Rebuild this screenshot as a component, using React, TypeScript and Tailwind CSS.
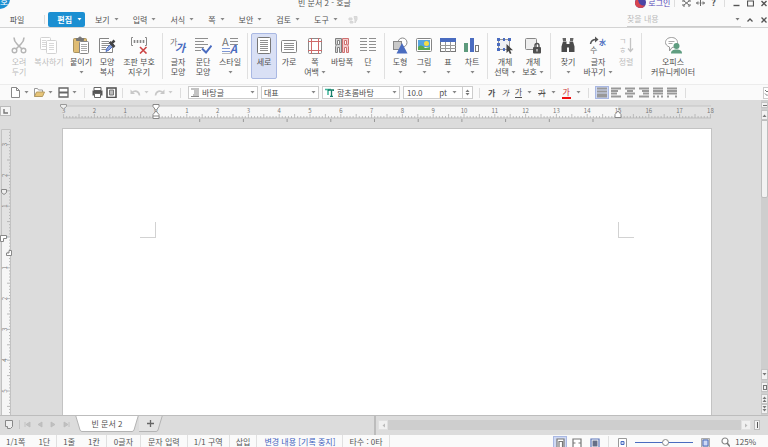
import React, { useState } from "react";
import clsx from "clsx";

const GRAY = "#8f8f8f";
const DARK = "#505050";
const BLUE = "#4a6cc0";
const RED = "#cc4444";

const Caret = ({ className }: { className?: string }) => (
  <svg className={clsx("shrink-0", className)} width="5" height="3" viewBox="0 0 5 3">
    <path d="M0.5 0h4L2.5 2.500z" fill="currentColor" />
  </svg>
);

const Icon = ({ w = 18, h = 18, children }: { w?: number; h?: number; children: React.ReactNode }) => (
  <svg className="shrink-0" width={w} height={h} viewBox={`0 0 ${w} ${h}`} fill="none" aria-hidden="true">
    {children}
  </svg>
);

const lines = (x1: number, x2: number, ys: number[], color = GRAY) =>
  ys.map((y) => <path key={`${x1}-${y}`} d={`M${x1} ${y}H${x2}`} stroke={color} />);

type RibbonItem = {
  label: string[];
  width: string;
  icon: React.ReactNode;
  caret?: boolean;
  disabled?: boolean;
};

const ribbonGroups: RibbonItem[][] = [
  [
    {
      label: ["오려", "두기"],
      width: "w-6",
      disabled: true,
      icon: (
        <Icon>
          <path d="M4 1.500c0 3 1 4.500 3 6.500l5 5M14 1.500c0 3-1 4.500-3 6.500l-5 5" stroke="#b5b5b5" strokeWidth="1.600" />
          <circle cx="4.500" cy="14.500" r="2.300" stroke="#b5b5b5" strokeWidth="1.400" />
          <circle cx="13.500" cy="14.500" r="2.300" stroke="#b5b5b5" strokeWidth="1.400" />
        </Icon>
      ),
    },
    {
      label: ["복사하기"],
      width: "w-9",
      disabled: true,
      icon: (
        <Icon>
          <rect x="0.500" y="1.500" width="10" height="12" rx="1" fill="#fff" stroke="#d2d2d2" />
          {lines(2, 6, [4.5, 6.5, 8.5, 10.5], "#d8d8d8")}
          <rect x="6.500" y="4.500" width="10" height="13" rx="1" fill="#fff" stroke="#d2d2d2" />
          {lines(9, 14, [7.5, 9.5, 11.5, 13.5], "#d8d8d8")}
        </Icon>
      ),
    },
    {
      label: ["붙이기"],
      width: "w-7",
      caret: true,
      icon: (
        <Icon>
          <rect x="1.500" y="2.500" width="13" height="14" rx="1" fill="#dfbc74" stroke="#a8925f" />
          <path d="M4.500 4.500v-2h2a1.500 1.500 0 0 1 3 0h2v2z" fill="#777" stroke="#777" />
          <rect x="7.500" y="5.500" width="9" height="12" rx="1" fill="#fff" stroke="#858585" />
          {lines(9, 15, [8.5, 10.5, 12.5, 14.5], "#aaa")}
        </Icon>
      ),
    },
    {
      label: ["모양", "복사"],
      width: "w-6",
      icon: (
        <Icon>
          <path d="M14.500 11v5.500h-13v-14H11" fill="#fff" stroke="#858585" />
          {lines(3.5, 11, [5.5, 7.5, 9.5])}
          {lines(3.5, 8, [11.5, 13.5])}
          <path d="M8 15.500l1-3.500 5-5 2 2-5 5z" fill="#8ea4dc" stroke={BLUE} />
          <path d="M11.500 6l5 5M13 8l3.500-3.500" stroke="#444" strokeWidth="2.500" />
        </Icon>
      ),
    },
    {
      label: ["조판 부호", "지우기"],
      width: "w-10",
      icon: (
        <Icon>
          <path d="M3 1.500H1.500v8H3M15 1.500h1.500v8H15" stroke="#888" />
          <path d="M4.500 4v3M7.500 4v3M10.500 4v3M13.500 4v3" stroke="#888" strokeWidth="1.600" />
          <path d="M10 11l6.500 6.500M16.500 11L10 17.500" stroke={RED} strokeWidth="1.600" />
        </Icon>
      ),
    },
  ],
  [
    {
      label: ["글자", "모양"],
      width: "w-6",
      icon: (
        <Icon>
          <text x="1" y="9" fontSize="8" fill="#777">가</text>
          <text x="6" y="16" fontSize="11" fontWeight="700" fontStyle="italic" fill={BLUE}>가</text>
        </Icon>
      ),
    },
    {
      label: ["문단", "모양"],
      width: "w-[26px]",
      icon: (
        <Icon>
          {lines(1, 14, [2.5, 8.5])}
          {lines(1, 10, [5.5, 11.5])}
          {lines(1, 7, [14.5])}
          <path d="M8 12.500l4 4 5.500-7" stroke={BLUE} strokeWidth="2" />
        </Icon>
      ),
    },
    {
      label: ["스타일"],
      width: "w-7",
      caret: true,
      icon: (
        <Icon>
          <text x="1" y="10" fontSize="11" fill="#777">A</text>
          {lines(9, 17, [2.5, 5.5, 8.5])}
          {lines(1, 9, [12.5, 15.5], "#7d96d4")}
          <path d="M1 17.500h10" stroke="#bbb" />
          <text x="9" y="17" fontSize="11" fontWeight="700" fontStyle="italic" fill={BLUE}>A</text>
        </Icon>
      ),
    },
  ],
  [
    {
      label: ["세로"],
      width: "w-[26px]",
      icon: (
        <Icon>
          <rect x="2.500" y="1.500" width="13" height="16" rx="1" fill="#fff" stroke="#777" />
          {lines(5, 13, [4.5, 6.5, 8.5, 10.5, 12.5, 14.5])}
        </Icon>
      ),
    },
    {
      label: ["가로"],
      width: "w-6",
      icon: (
        <Icon>
          <rect x="1.500" y="4.500" width="15" height="12" rx="1" fill="#fff" stroke="#858585" />
          {lines(4, 14, [7.5, 9.5, 11.5, 13.5])}
        </Icon>
      ),
    },
    {
      label: ["쪽", "여백"],
      width: "w-7",
      caret: true,
      icon: (
        <Icon>
          <rect x="2.500" y="2.500" width="13" height="15" rx="1" fill="#fff" stroke="#8a8a8a" />
          <path d="M5.500 2v16M12.500 2v16M2 5.500h14M2 14.500h14" stroke="#d06a6a" />
        </Icon>
      ),
    },
    {
      label: ["바탕쪽"],
      width: "w-[26px]",
      icon: (
        <Icon>
          <path
            d="M2.500 2.500h6v14h-2v-5h-2v5h-2v-6l1-2h-1zM4.500 4.500v4h2v-4z"
            fill="#d4d4d4"
            fillRule="evenodd"
            stroke="#808080"
          />
          <path
            d="M15.500 2.500h-6v14h2v-5h2v5h2v-6l-1-2h1zM13.500 4.500v4h-2v-4z"
            fill="#f3cccc"
            fillRule="evenodd"
            stroke="#cf7070"
          />
        </Icon>
      ),
    },
    {
      label: ["단"],
      width: "w-[26px]",
      caret: true,
      icon: (
        <Icon>
          {lines(1, 8, [2.5, 5.5, 8.5, 11.5, 14.5])}
          {lines(10, 17, [2.5, 5.5, 8.5, 11.5, 14.5])}
        </Icon>
      ),
    },
  ],
  [
    {
      label: ["도형"],
      width: "w-6",
      caret: true,
      icon: (
        <Icon>
          <circle cx="11.500" cy="6.500" r="4.500" fill="#fff" stroke="#888" />
          <rect x="2.500" y="5.500" width="8" height="8" fill="#c9c9c9" stroke="#888" />
          <path d="M11 7l5.500 10.500H5.500z" fill={BLUE} />
        </Icon>
      ),
    },
    {
      label: ["그림"],
      width: "w-6",
      caret: true,
      icon: (
        <Icon>
          <rect x="1.500" y="2.500" width="15" height="13" rx="1" fill="#fff" stroke="#858585" />
          <path d="M3 4h12v7H3z" fill="#56a5df" />
          <path d="M3 11c3-3 5-1 7 1l5-1v3H3z" fill="#58aa50" />
          <circle cx="11.500" cy="7.500" r="2.500" fill="#f7dc45" />
        </Icon>
      ),
    },
    {
      label: ["표"],
      width: "w-6",
      caret: true,
      icon: (
        <Icon>
          <rect x="1.500" y="2.500" width="15" height="13" fill="#fff" stroke="#777" />
          <path d="M1 2h16v4H1z" fill={BLUE} />
          <path d="M6.500 6v10M11.500 6v10M1 9.500h16M1 12.500h16" stroke="#999" />
        </Icon>
      ),
    },
    {
      label: ["차트"],
      width: "w-6",
      caret: true,
      icon: (
        <Icon>
          <rect x="1" y="7" width="4" height="9" fill="#5d9a7c" />
          <rect x="7" y="2" width="4" height="14" fill={BLUE} />
          <rect x="12.500" y="9.500" width="3" height="6" fill="#fff" stroke="#777" />
        </Icon>
      ),
    },
  ],
  [
    {
      label: ["개체", "선택"],
      width: "w-7",
      caret: true,
      icon: (
        <Icon>
          <rect x="2.500" y="3.500" width="11" height="10" fill="#eef0f4" stroke="#999" />
          <path
            d="M1 2h3v3H1zM7 2h2v3H7zM12 2h3v3h-3zM1 7h3v3H1zM1 12h3v3H1zM7 12h2v3H7z"
            fill={BLUE}
          />
          <path d="M10.500 8v9l2-2 1.500 3 1.500-.8-1.500-3h3z" fill="#444" />
        </Icon>
      ),
    },
    {
      label: ["개체", "보호"],
      width: "w-7",
      caret: true,
      icon: (
        <Icon>
          <rect x="1.500" y="2.500" width="11" height="11" rx="1" fill="#eee" stroke="#888" />
          <rect x="9" y="11" width="8" height="6.500" rx="1" fill={DARK} />
          <path d="M11 11V9.500a2 2 0 0 1 4 0V11" stroke={DARK} strokeWidth="1.400" />
          <path d="M13 13v2.500" stroke="#fff" />
        </Icon>
      ),
    },
  ],
  [
    {
      label: ["찾기"],
      width: "w-7",
      caret: true,
      icon: (
        <Icon>
          <path d="M3.500 2H7v3H4zM11 2h3.500L14 5h-3z" fill="#666" />
          <path d="M4 5.500h3.500V8h3V5.500H14l1.500 5V16H10v-4.500H8V16H2.500v-5.500z" fill="#4a4a4a" />
        </Icon>
      ),
    },
    {
      label: ["글자", "바꾸기"],
      width: "w-8",
      caret: true,
      icon: (
        <Icon>
          <path d="M1.500 8C2 4.500 4.500 3.500 7 3.500" stroke="#555" strokeWidth="1.500" />
          <path d="M6 0.500l3.500 3L6 6.500z" fill="#555" />
          <text x="10" y="9" fontSize="7" fontWeight="700" fill={BLUE}>水</text>
          <text x="1" y="17" fontSize="8" fill="#666">수</text>
        </Icon>
      ),
    },
    {
      label: ["정렬"],
      width: "w-6",
      disabled: true,
      icon: (
        <Icon>
          <text x="2" y="8" fontSize="8" fill="#bbb">ㄱ</text>
          <text x="2" y="17" fontSize="8" fill="#bbb">ㅎ</text>
          <path d="M13.500 2v13M11 12.500l2.500 3 2.500-3" stroke="#c4c4c4" strokeWidth="1.300" />
        </Icon>
      ),
    },
  ],
  [
    {
      label: ["오피스", "커뮤니케이터"],
      width: "w-14",
      icon: (
        <Icon>
          <path
            d="M7.500 1.500c3.500 0 6 2 6 5s-2.500 5-5.500 5L5.500 15v-4C3 10 1.500 8.500 1.500 6.500c0-3 2.500-5 6-5z"
            fill="#fff"
            stroke="#999"
          />
          <path d="M4.500 5.500h6M4.500 7.500h4" stroke="#aaa" />
          <circle cx="12.500" cy="10" r="3" fill="#5f9d80" />
          <path d="M7 17.500c0-3 2-4 5.500-4s5.500 1 5.500 4z" fill="#5f9d80" />
        </Icon>
      ),
    },
  ],
];

const menus = ["보기", "입력", "서식", "쪽", "보안", "검토", "도구"];

const fontSelect =
  "h-[13px] w-full appearance-none border border-[#cccccc] bg-white text-[8px] leading-[11px] text-[#505050] outline-none";

const ToolDivider = () => <span className="h-[10px] w-px shrink-0 bg-[#dddddd]" />;

function TitleBar() {
  return (
    <div className="relative -mt-[6px] flex h-[18px] items-center justify-end pr-px">
      <span className="absolute left-0 top-0 flex h-[15px] w-[10px] items-end overflow-hidden rounded-br-xl bg-[#1b8fd2] pb-px text-[9px] leading-3 text-white">
        호
      </span>
      <h1 className="absolute left-1/2 -translate-x-[86px] whitespace-nowrap text-[8px] text-[#555]">
        빈 문서 2 - 호글
      </h1>
      <button className="flex items-center gap-[2px] text-[8px] text-[#5548b8]">
        <Icon w={11} h={11}>
          <circle cx="5.500" cy="4.500" r="5.500" fill="#4b45a5" />
          <path d="M0 5.500a5.500 5.500 0 0 0 10 2C6 8 3 6 3 0 1 1 0 3 0 5.500z" fill="#d8454f" />
        </Icon>
        로그인
      </button>
      <span className="ml-1 h-2 w-px bg-[#dddddd]" />
      <button aria-label="전체 화면" className="ml-[7px]">
        <Icon w={9} h={8}>
          <path d="M1 3V1h2M6 1h2v2M8 5v2H6M3 7H1V5M2 2l5 4M7 2L2 6" stroke="#666" />
        </Icon>
      </button>
      <button aria-label="크기 조절" className="ml-[5px]">
        <Icon w={9} h={8}>
          <path d="M4.500 1v6M0.500 4h3M5.500 4h3M2 2.500L.5 4 2 5.500M7 2.500L8.500 4 7 5.500" stroke="#666" />
        </Icon>
      </button>
      <button aria-label="도움말" className="ml-[6px] text-[9px] font-bold text-[#555]">?</button>
      <span className="ml-2 h-2 w-px bg-[#dddddd]" />
      <button aria-label="최소화" className="ml-2">
        <Icon w={7} h={7}><path d="M0.500 5.500h6" stroke="#555" strokeWidth="1.400" /></Icon>
      </button>
      <button aria-label="최대화" className="ml-[7px]">
        <Icon w={7} h={7}><path d="M0.500 1h6v5h-6z" stroke="#555" strokeWidth="1.200" /></Icon>
      </button>
      <button aria-label="닫기" className="ml-[7px]">
        <Icon w={6} h={7}><path d="M0.500 1l5 5M5.500 1l-5 5" stroke="#555" strokeWidth="1.400" /></Icon>
      </button>
    </div>
  );
}

function MenuBar() {
  return (
    <nav className="flex h-4 items-stretch border-b border-[#d4d4d4] text-[8px] text-[#505050]">
      <button className="w-[34px]">파일</button>
      <span className="ml-[10px] mr-[3px] h-[9px] w-px self-center bg-[#dddddd]" />
      <button className="flex w-[37px] items-center justify-end gap-[5px] rounded-xs bg-[#1b8fd2] pr-[3px] font-bold text-white">
        편집 <Caret />
      </button>
      <div className="ml-[3px] flex">
        {menus.map((menu) => (
          <button key={menu} className="flex items-center gap-1 px-[7px]">
            {menu} <Caret className="text-[#888]" />
          </button>
        ))}
      </div>
      <button aria-label="도움" className="ml-[3px]">
        <Icon w={10} h={9}>
          <path d="M1 3h3v2H1zM2 6.500h3V8H2zM6 1.500h3v3L7 8V5z" fill="#dcdcdc" stroke="#d6d6d6" />
        </Icon>
      </button>
      <div className="ml-auto flex w-[114px] items-center border-b border-[#cccccc]">
        <input
          aria-label="찾을 내용"
          placeholder="찾을 내용"
          className="w-full min-w-0 bg-transparent text-[8px] leading-3 outline-none placeholder:text-[#bbbbbb]"
        />
        <Caret className="mr-px text-[#777]" />
      </div>
      <button aria-label="접기" className="ml-[6px]">
        <Icon w={6} h={6}><path d="M0.500 4.500L3 2l2.500 2.500" stroke="#555" strokeWidth="1.300" /></Icon>
      </button>
      <button aria-label="문서 닫기" className="ml-2 mr-px">
        <Icon w={6} h={6}><path d="M0.500 0.500l5 5M5.500 0.500l-5 5" stroke="#555" strokeWidth="1.300" /></Icon>
      </button>
    </nav>
  );
}

function Ribbon() {
  const [orientation, setOrientation] = useState("세로");
  return (
    <section className="flex h-14 shrink-0 bg-[#fcfcfc] py-[5px] pl-1">
      {ribbonGroups.map((group, i) => (
        <div
          key={i}
          className="flex border-r border-[#e0e0e0] px-[3px] last:border-r-0"
        >
          {group.map((item) => {
            const name = item.label.join(" ");
            return (
              <button
                key={name}
                disabled={item.disabled}
                onClick={() => (name === "세로" || name === "가로") && setOrientation(name)}
                className={clsx(
                  "flex flex-col items-center rounded-xs border pt-[2px] text-[8px] leading-[10px] whitespace-nowrap",
                  item.width,
                  item.disabled ? "text-[#bcbcbc]" : "text-[#505050]",
                  name === orientation ? "border-[#a9b8e3] bg-[#d9e0f5] text-[#3f62b8]" : "border-transparent"
                )}
              >
                {item.icon}
                <span className="mt-[3px]">{item.label[0]}</span>
                <span className="flex h-[10px] items-center gap-[2px]">
                  {item.label[1]}
                  {item.caret && <Caret className="text-[#888]" />}
                </span>
              </button>
            );
          })}
        </div>
      ))}
    </section>
  );
}

const ToolButton = ({ name, caret, faded, children }: { name: string; caret?: boolean; faded?: boolean; children: React.ReactNode }) => (
  <button
    aria-label={name}
    disabled={faded}
    className={clsx("flex items-center gap-[3px]", faded ? "text-[#cccccc]" : "text-[#888]")}
  >
    {children}
    {caret && <Caret />}
  </button>
);

const alignIcons = [
  { name: "양쪽 정렬", path: "M1 1.500h10M1 4.500h10M1 7.500h10M1 9.500h10" },
  { name: "왼쪽 정렬", path: "M1 1.500h10M1 4h7M1 6.500h6M1 9.500h10" },
  { name: "가운데 정렬", path: "M1 1.500h10M3 4h6M1 6.500h10M3 9.500h6" },
  { name: "오른쪽 정렬", path: "M1 1.500h10M4 4h7M5 6.500h6M1 9.500h10" },
  { name: "배분 정렬", path: "M1 1.500h10M1 4h10M1 6.500h10M1 9.500h2M5 9.500h2M9 9.500h2" },
  { name: "나눔 정렬", path: "M1 1.500h10M1 4h10M1 6.500h10M1 9.500h2M9 9.500h2" },
];

function Toolbar() {
  const [size, setSize] = useState("10.0");
  const [align, setAlign] = useState("양쪽 정렬");
  return (
    <section className="flex h-4 shrink-0 items-center border-t border-[#ececec] bg-[#fafafa] text-[8px] text-[#505050]">
      <div className="flex items-center gap-[5px] pl-[10px]">
        <ToolButton name="새 문서" caret>
          <Icon w={11} h={11}>
            <path d="M1.500 0.500h5l3 3v7h-8zM6.500 0.500v3h3" fill="#fff" stroke="#888" />
          </Icon>
        </ToolButton>
        <ToolButton name="불러오기" caret>
          <Icon w={11} h={11}>
            <path d="M0.500 9.500v-8h3l1 1.500h4v2" fill="#fff" stroke="#999" />
            <path d="M0.500 9.500l2-4.500h8l-2 4.500z" fill="#e6c478" stroke="#b39a60" />
          </Icon>
        </ToolButton>
        <ToolButton name="저장하기" caret>
          <Icon w={11} h={11}>
            <path d="M1 1h9v9H1z" fill="#fff" stroke="#666" strokeWidth="1.300" />
            <path d="M1 5.500h9" stroke="#666" strokeWidth="2" />
          </Icon>
        </ToolButton>
      </div>
      <div className="ml-[7px] flex items-center gap-[3px]">
        <ToolDivider />
        <div className="ml-1">
          <ToolButton name="인쇄">
            <Icon w={11} h={11}>
              <path d="M2 0.500h7v3H2z" fill="#fff" stroke="#666" />
              <path d="M0.500 3.500h10v5h-10z" fill="#555" />
              <path d="M2.500 6.500h6v4h-6z" fill="#fff" stroke="#666" />
            </Icon>
          </ToolButton>
        </div>
        <ToolButton name="미리 보기">
          <Icon w={11} h={11}>
            <rect x="1" y="1" width="9" height="9.500" fill="#fff" stroke="#555" strokeWidth="1.600" />
            <path d="M3.500 3h4v5h-4z" fill="#bbb" stroke="#777" />
          </Icon>
        </ToolButton>
      </div>
      <span className="w-[5px]" />
      <ToolDivider />
      <div className="ml-[7px] flex items-center gap-[5px]">
        <ToolButton name="되돌리기" caret faded>
          <Icon w={11} h={9}>
            <path d="M2 4.500C5 2 9 3 9.500 7.500" stroke="#c8c8c8" strokeWidth="1.600" />
            <path d="M0.500 1.500v4.500h4.500z" fill="#c8c8c8" />
          </Icon>
        </ToolButton>
        <ToolButton name="다시 실행" caret faded>
          <Icon w={11} h={9}>
            <path d="M9 4.500C6 2 2 3 1.500 7.500" stroke="#c8c8c8" strokeWidth="1.600" />
            <path d="M10.500 1.500v4.500H6z" fill="#c8c8c8" />
          </Icon>
        </ToolButton>
      </div>
      <span className="w-[7px]" />
      <ToolDivider />

      <label className="relative ml-[7px] w-[70px]">
        <span className="absolute left-[3px] top-[2px]">
          <Icon w={9} h={9}>
            <path d="M0 1h8M3 3h5M3 5h5M2 7h6M0 8.500h8" stroke="#888" strokeWidth="1.200" />
          </Icon>
        </span>
        <select aria-label="스타일" className={clsx(fontSelect, "pl-[13px]")}>
          <option>바탕글</option>
        </select>
        <Caret className="pointer-events-none absolute right-[3px] top-[5px] text-[#888]" />
      </label>
      <label className="relative ml-[3px] w-[58px]">
        <select aria-label="언어" className={clsx(fontSelect, "pl-[2px]")}>
          <option>대표</option>
        </select>
        <Caret className="pointer-events-none absolute right-[3px] top-[5px] text-[#888]" />
      </label>
      <label className="relative ml-[3px] w-[78px]">
        <span className="absolute left-[3px] top-[2px]">
          <Icon w={9} h={9}>
            <path d="M0 1.500h6M3 1.500V7" stroke="#3fb59a" strokeWidth="1.500" />
            <path d="M3.500 3V2h5v1M6.500 2v6M5 8.500h3" stroke="#17806a" strokeWidth="1.300" />
          </Icon>
        </span>
        <select aria-label="글꼴" className={clsx(fontSelect, "pl-[14px]")}>
          <option>함초롬바탕</option>
        </select>
        <Caret className="pointer-events-none absolute right-[3px] top-[5px] text-[#888]" />
      </label>
      <div className="ml-[3px] flex h-[13px] w-[70px] items-center border border-[#cccccc] bg-white">
        <input
          aria-label="글자 크기"
          value={size}
          onChange={(e) => setSize(e.target.value)}
          className="w-full min-w-0 pl-[3px] text-[8px] leading-[11px] outline-none"
        />
        <span>pt</span>
        <Caret className="mx-[5px] text-[#888]" />
        <span className="flex h-full w-[10px] shrink-0 flex-col items-center justify-evenly border-l border-[#cccccc] text-[#777]">
          <button aria-label="크게" className="rotate-180"><Caret className="block" /></button>
          <button aria-label="작게"><Caret className="block" /></button>
        </span>
      </div>
      <span className="w-[6px]" />
      <ToolDivider />
      <div className="ml-2 flex items-center gap-[6px] leading-[10px]">
        <button aria-label="진하게" className="font-bold">가</button>
        <button aria-label="기울임" className="italic">가</button>
        <button aria-label="밑줄" className="flex items-center gap-[5px]">
          <span className="border-b border-[#555]">가</span>
          <Caret className="text-[#888]" />
        </button>
        <button aria-label="취소선" className="flex items-center gap-[5px]">
          <span className="line-through">가</span>
          <Caret className="text-[#888]" />
        </button>
        <button aria-label="글자 색" className="flex items-center gap-[5px]">
          <span className="border-b-2 border-[#ee1111] px-px text-[#cc3333]">가</span>
          <Caret className="text-[#888]" />
        </button>
      </div>
      <span className="w-[7px]" />
      <ToolDivider />
      <div className="ml-[6px] flex items-center">
        {alignIcons.map((item) => (
          <button
            key={item.name}
            aria-label={item.name}
            onClick={() => setAlign(item.name)}
            className={clsx(
              "flex h-[13px] w-[14px] items-center justify-center border",
              align === item.name ? "border-[#a9b8e3] bg-[#cfd9f3]" : "border-transparent"
            )}
          >
            <Icon w={12} h={11}>
              <path d={item.path} stroke="#999" strokeWidth="2" />
            </Icon>
          </button>
        ))}
      </div>
      <span className="w-[6px]" />
      <ToolDivider />
      <button aria-label="더 보기" className="ml-auto flex h-3 w-[5px] items-center border border-r-0 border-[#cccccc] bg-white">
        <Icon w={4} h={8}><path d="M1 1l2 2 1-1M1 4.500l2 2 1-1" stroke="#777" /></Icon>
      </button>
    </section>
  );
}

// 1cm on screen at 125% zoom
const CM = 30.8;

const range = (from: number, to: number) => Array.from({ length: to - from + 1 }, (_, i) => from + i);

function HorizontalRuler() {
  const zero = 99;
  return (
    <svg className="block shrink-0" width="660" height="18" viewBox="0 0 660 18" aria-label="가로 눈금자">
      <rect x="6" y="2" width="648" height="12" fill="#e2e2e2" />
      <rect x={zero} y="2" width={15 * CM} height="12" fill="#f6f6f6" />
      <path d="M6 2h648" stroke="#c4c4c4" />
      <path d="M6 14h648" stroke="#bdbdbd" />
      {range(-30, 180).map((mm) => (
        <path
          key={mm}
          d={`M${zero + (mm * CM) / 10} ${mm % 5 === 0 ? 10 : 12}V14`}
          stroke="#b0b0b0"
          strokeWidth="0.800"
        />
      ))}
      {range(-3, 18).map((cm) => (
        <text key={cm} x={zero + cm * CM} y="9" fontSize="6" fill="#777" textAnchor="middle">
          {Math.abs(cm)}
        </text>
      ))}
      {range(1, 10).map((n) => (
        <path key={n} d={`M${zero + n * 43.7} 15v3`} stroke="#999" />
      ))}
      <path d="M3.500 0.500h6v2l-3 2.500-3-2.500z" fill="#eee" stroke="#999" />
      <path d={`M${zero - 3} 0.500h6v2l-3 4-3-4zM${zero} 7l3 3.500v4h-6v-4zM${zero - 3} 12h6`} fill="#fff" stroke="#888" />
      <path d={`M${zero + 15 * CM} 7l3 3.500v3h-6v-3z`} fill="#fff" stroke="#888" />
    </svg>
  );
}

function VerticalRuler() {
  const zero = 108;
  return (
    <svg className="block" width="12" height="900" viewBox="0 0 12 900" aria-label="세로 눈금자">
      <rect x="1" y="0" width="10" height={zero} fill="#e2e2e2" />
      <rect x="1" y={zero} width="10" height="800" fill="#f6f6f6" />
      <path d="M1.500 900V0.500h9V900" fill="none" stroke="#c2c2c2" />
      {range(-34, 250).map((mm) => (
        <path
          key={mm}
          d={`M${mm % 5 === 0 ? 7 : 9} ${zero + (mm * CM) / 10}H10`}
          stroke="#aaa"
          strokeWidth="0.800"
        />
      ))}
      {range(-3, 25).map((cm) => (
        <text
          key={cm}
          transform={`translate(7 ${zero + cm * CM}) rotate(-90)`}
          fontSize="6"
          fill="#777"
          textAnchor="middle"
        >
          {Math.abs(cm)}
        </text>
      ))}
      <path d="M1.500 60.500h5v3l-2.500 2-2.500-2z" fill="#eee" stroke="#888" />
      <path d="M0.500 106.500h6v3h-3v3h-3z" fill="#fff" stroke="#888" />
      <path d="M11.500 121.500v5h-5v-2.500h2.500v-2.500z" fill="#fff" stroke="#888" />
    </svg>
  );
}

const scrollButton = "flex w-full items-center justify-center border border-[#c4c4c4] bg-[#f2f2f2] text-[#777]";

function Editor() {
  return (
    <main className="flex min-h-0 flex-1 bg-[#dcdcdc]">
      <aside className="flex w-3 shrink-0 flex-col pt-[6px]">
        <button aria-label="탭 종류" className="flex h-[10px] w-[11px] shrink-0 items-center justify-center border border-[#bbbbbb] bg-[#f4f4f4]">
          <Icon w={5} h={5}><path d="M1 0v4h4" stroke="#777" strokeWidth="1.400" /></Icon>
        </button>
        <div className="mt-[13px] min-h-0 flex-1 overflow-hidden">
          <VerticalRuler />
        </div>
      </aside>
      <div className="flex min-w-0 flex-1 flex-col items-center overflow-hidden pt-1">
        <HorizontalRuler />
        <article className="mt-[6px] flex w-[650px] flex-1 items-start justify-between border border-b-0 border-[#c3c3c3] bg-white px-[77px] pt-[93px]">
          <span className="h-4 w-4 border-b border-r border-[#d2d2d2]" />
          <span className="h-4 w-4 border-b border-l border-[#d2d2d2]" />
        </article>
      </div>
      <div className="flex w-[7px] shrink-0 flex-col bg-[#cecece] pt-[2px]">
        <button aria-label="창 나누기" className={clsx(scrollButton, "h-[6px]")}>
          <span className="h-px w-1 bg-[#777]" />
        </button>
        <button aria-label="위로" className={clsx(scrollButton, "mt-[2px] h-[10px]")}>
          <Caret className="rotate-180" />
        </button>
        <span className="h-[78px] w-full rounded-b-xs border border-[#bdbdbd] bg-[#f2f2f2]" />
        <span className="flex-1" />
        <button aria-label="아래로" className={clsx(scrollButton, "h-[11px]")}><Caret /></button>
        <button aria-label="개체 찾기" className={clsx(scrollButton, "mt-[2px] h-[10px]")}>
          <span className="h-[5px] w-1 border border-[#777]" />
        </button>
        <button aria-label="이전 쪽" className={clsx(scrollButton, "mt-[2px] h-[10px] flex-col")}>
          <Caret className="rotate-180" /><Caret className="rotate-180" />
        </button>
        <button aria-label="다음 쪽" className={clsx(scrollButton, "h-[10px] flex-col")}><Caret /><Caret /></button>
        <span className="h-px" />
      </div>
    </main>
  );
}

const navIcons = [
  { name: "처음 탭", path: "M1 1v5M6 1v5L2 3.500z" },
  { name: "이전 탭", path: "M5 1v5L1 3.500z" },
  { name: "다음 탭", path: "M1 1v5l4-2.500z" },
  { name: "마지막 탭", path: "M6 1v5M1 1v5l4-2.500z" },
];

function TabBar() {
  return (
    <div className="flex h-5 shrink-0 items-start border-t border-[#bdbdbd] bg-[#dcdcdc] text-[8px] text-[#505050]">
      <button aria-label="문서 탭 목록" className="ml-1 mt-1">
        <Icon w={10} h={9}><path d="M1.500 0.500h7v6l-2 2H3.500v-2h-2z" fill="#eee" stroke="#888" /></Icon>
      </button>
      <span className="ml-[5px] mt-1 h-[9px] w-px bg-[#c4c4c4]" />
      <div className="ml-1 mt-[5px] flex gap-[6px]">
        {navIcons.map((nav) => (
          <button key={nav.name} aria-label={nav.name}>
            <Icon w={7} h={7}><path d={nav.path} fill="#c0c0c0" stroke="#bababa" strokeWidth="0.800" /></Icon>
          </button>
        ))}
      </div>
      <button className="relative ml-[5px] h-4 w-16 leading-[14px]">
        <svg className="absolute inset-0" width="64" height="16" viewBox="0 0 64 16" aria-hidden="true">
          <path d="M0.500-1L5 14q.5 1.500 2 1.500h50q1.500 0 2-1.500L63.500-1" fill="#fff" stroke="#b3b3b3" />
        </svg>
        <span className="relative">빈 문서 2</span>
      </button>
      <button aria-label="새 탭" className="relative h-4 w-6">
        <svg className="block" width="24" height="16" viewBox="0 0 24 16" aria-hidden="true">
          <path d="M-3 13q.5 2.500 3 2.500h17q1.500 0 2-1.500L23.500-1H-1" fill="#e4e4e4" />
          <path d="M-3 13q.5 2.500 3 2.500h17q1.500 0 2-1.500L23.500-1M-.5-1L-4 13" stroke="#b3b3b3" fill="none" />
          <path d="M8 7.500h7M11.500 4v7" stroke="#666" strokeWidth="1.300" />
        </svg>
      </button>
      <span className="ml-auto h-full w-[2px] bg-[#bcbcbc]" />
      <div className="ml-[2px] mt-1 flex h-[10px] w-1/2 max-w-[373px] items-stretch bg-[#cecece]">
        <button aria-label="왼쪽으로" className="flex w-[10px] items-center justify-center border border-[#e0e0e0] bg-[#f0f0f0]">
          <Caret className="rotate-90 text-[#bbb]" />
        </button>
        <button aria-label="오른쪽으로" className="ml-auto flex w-[10px] items-center justify-center border border-[#e0e0e0] bg-[#f0f0f0]">
          <Caret className="-rotate-90 text-[#bbb]" />
        </button>
      </div>
      <button aria-label="세로로 창 나누기" className="ml-[3px] mr-2 mt-1 flex h-[10px] w-[6px] items-center justify-center border border-[#bbbbbb] bg-[#f2f2f2]">
        <span className="h-[6px] w-px bg-[#555]" />
      </button>
    </div>
  );
}

const statusCells = [
  { text: "1/1쪽" },
  { text: "1단", border: true },
  { text: "1줄" },
  { text: "1칸", border: true },
  { text: "0글자", border: true, wide: true },
  { text: "문자 입력", border: true, wide: true },
  { text: "1/1 구역", border: true },
  { text: "삽입", border: true },
  { text: "변경 내용 [기록 중지]", border: true, wide: true, active: true },
  { text: "타수 : 0타", border: true },
];

function StatusBar() {
  const [zoom, setZoom] = useState(125);
  return (
    <footer className="flex h-3 shrink-0 items-start overflow-hidden bg-[#fafafa] text-[8px] leading-3 text-[#555] whitespace-nowrap">
      {statusCells.map((cell) => (
        <span
          key={cell.text}
          className={clsx(
            "border-r pt-px",
            cell.wide ? "px-[7px]" : "px-[6px]",
            cell.border ? "border-[#e0e0e0]" : "border-transparent",
            cell.active && "text-[#3f62c0]"
          )}
        >
          {cell.text}
        </span>
      ))}
      <div className="ml-auto flex items-start pr-3 pt-px">
        <button aria-label="쪽 윤곽" className="flex h-[14px] w-[14px] justify-center border border-[#a9b8e3] bg-[#cfd9f3] pt-px">
          <Icon w={9} h={11}><path d="M1 1h7v9H1zM3 3.500h3.500V10H3z" fill="#fff" stroke="#777" strokeWidth="1.200" /></Icon>
        </button>
        <button aria-label="폭 맞춤" className="ml-[5px] pt-[2px]">
          <Icon w={10} h={10}><path d="M1 1h8v9H1zM1 5h2.500M9 5H6.500" fill="#fff" stroke="#777" strokeWidth="1.200" /></Icon>
        </button>
        <button aria-label="쪽 맞춤" className="ml-2 pt-[2px]">
          <Icon w={10} h={10}><path d="M1 1h8v9H1z" fill="#fff" stroke="#5a75b8" strokeWidth="1.200" /><path d="M2.500 2.500h5v6h-5z" fill="#666f86" /></Icon>
        </button>
        <span className="ml-2 h-3 w-px bg-[#e0e0e0]" />
        <button aria-label="축소" onClick={() => setZoom(zoom - 5)} className="ml-[9px] pt-[2px]">
          <Icon w={9} h={10}><path d="M0.500 0.500h8v9h-8z" fill="#fff" stroke="#999" /><path d="M3 3.500h3v3H3z" fill="#cdd9f5" stroke={BLUE} /></Icon>
        </button>
        <input
          type="range"
          aria-label="확대/축소"
          min="10"
          max="230"
          value={zoom}
          onChange={(e) => setZoom(Number(e.target.value))}
          className="ml-2 mt-[2px] h-2 w-[58px] appearance-none bg-[linear-gradient(#4a6cc0,#4a6cc0)] bg-[length:100%_1px] bg-center bg-no-repeat [&::-webkit-slider-thumb]:h-[7px] [&::-webkit-slider-thumb]:w-[7px] [&::-webkit-slider-thumb]:appearance-none [&::-webkit-slider-thumb]:rounded-full [&::-webkit-slider-thumb]:border [&::-webkit-slider-thumb]:border-[#888] [&::-webkit-slider-thumb]:bg-white"
        />
        <button aria-label="확대" onClick={() => setZoom(zoom + 5)} className="ml-2 pt-[2px]">
          <Icon w={9} h={10}><path d="M0.500 0.500h8v9h-8z" fill="#ccc" stroke="#aaa" /><path d="M2 2h5v6H2z" fill="#cdd9f5" stroke={BLUE} /></Icon>
        </button>
        <button aria-label="배율" className="ml-[11px] flex items-start gap-[5px]">
          <span className="pt-px">
            <Icon w={9} h={10}><circle cx="4" cy="4" r="3" fill="#fff" stroke="#888" strokeWidth="1.200" /><path d="M6 6l3 3.500" stroke="#777" strokeWidth="1.600" /></Icon>
          </span>
          <span>{zoom}%</span>
        </button>
      </div>
    </footer>
  );
}

function App() {
  return (
    <div
      lang="ko"
      className="flex h-screen flex-col overflow-hidden bg-[#fafafa] font-['Noto_Sans_CJK_KR','Noto_Sans',sans-serif]"
    >
      <header className="shrink-0">
        <TitleBar />
        <MenuBar />
        <Ribbon />
        <Toolbar />
      </header>
      <Editor />
      <TabBar />
      <StatusBar />
    </div>
  );
}

export default App;
